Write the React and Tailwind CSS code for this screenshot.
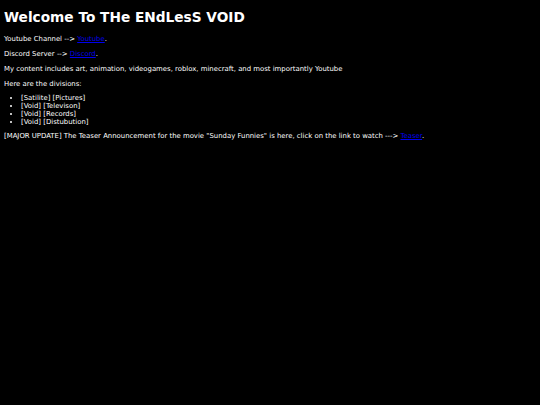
export default function App() {
  return (
    <div className="min-h-[405px] bg-black px-[4px] py-[1px] text-[6.9px] leading-[8px] text-white font-['DejaVu_Sans',Verdana,sans-serif]">
      <h1 className="mt-[7px] mb-[8px] text-[13.7px] leading-[19px] font-bold">Welcome To THe ENdLesS VOID</h1>
      <p className="my-[7px]">
        Youtube Channel --&gt; <a href="#" className="text-[#0000ee] underline">Youtube</a>.
      </p>
      <p className="my-[7px]">
        Discord Server --&gt; <a href="#" className="text-[#0000ee] underline">Discord</a>.
      </p>
      <p className="my-[7px]">
        My content includes art, animation, videogames, roblox, minecraft, and most importantly Youtube
      </p>
      <p className="mt-[7px] mb-[6px]">Here are the divisions:</p>
      <ul className="my-[6px] list-disc pl-[17px]">
        <li>[Satilite] [Pictures]</li>
        <li>[Void] [Televison]</li>
        <li>[Void] [Records]</li>
        <li>[Void] [Distubution]</li>
      </ul>
      <p className="mt-[6px] mb-[7px]">
        [MAJOR UPDATE] The Teaser Announcement for the movie "Sunday Funnies" is here, click on the link to watch ---&gt;{' '}
        <a href="#" className="text-[#0000ee] underline">Teaser</a>.
      </p>
    </div>
  );
}
